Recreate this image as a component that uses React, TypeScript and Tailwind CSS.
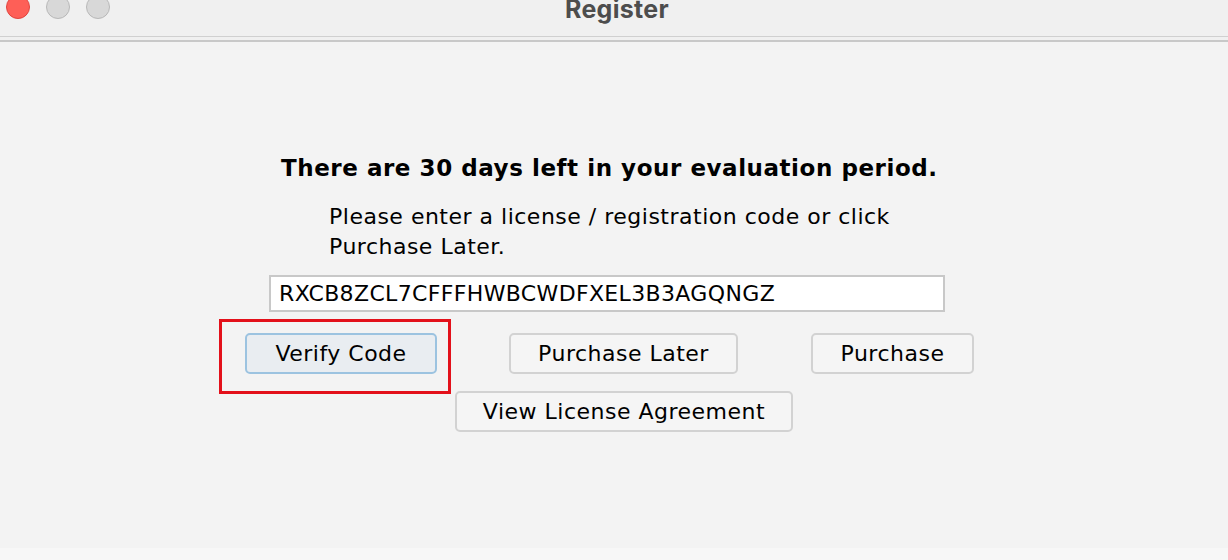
export default function App() {
  const font = { fontFamily: '"DejaVu Sans", "Lucida Grande", sans-serif' }

  return (
    <div className="w-[1228px] h-[560px] bg-[#f3f3f3] flex flex-col overflow-hidden" style={font}>
      {/* title bar */}
      <div className="h-[36px] bg-[#f0f0f0] flex items-start relative overflow-hidden">
        <div className="flex gap-[16px] pl-[6px] -mt-[5px]">
          <span className="w-[24px] h-[24px] rounded-full bg-[#fe5f57] border border-[#e0443e]" />
          <span className="w-[24px] h-[24px] rounded-full bg-[#d8d8d8] border border-[#b8b8b8]" />
          <span className="w-[24px] h-[24px] rounded-full bg-[#d8d8d8] border border-[#b8b8b8]" />
        </div>
        <div
          className="absolute left-0 right-0 -top-[9px] pl-[6px] text-center text-[25px] font-bold tracking-[0.3px] text-[#4d4d4d]"
          style={{ fontFamily: 'Inter, "Liberation Sans", sans-serif' }}
        >
          Register
        </div>
      </div>
      <div className="h-px bg-[#d0d0d0]" />
      <div className="h-[3px] bg-[#f0f0f0]" />
      <div className="h-[2px] bg-[#c8c8c8]" />

      {/* body */}
      <div className="flex-1 flex flex-col pt-[112px]">
        <div className="ml-[281px] text-[23px] tracking-[0.55px] font-bold text-black leading-[28px]">
          There are 30 days left in your evaluation period.
        </div>
        <div className="ml-[329px] mt-[20px] text-[22px] tracking-[0.5px] text-black leading-[30px]">
          Please enter a license / registration code or click
          <br />
          Purchase Later.
        </div>
        <div className="ml-[269px] mt-[13px] w-[676px] h-[37px] bg-white border-2 border-[#c8c8c8] flex items-center pl-[8px] text-[22px] tracking-[0.35px] text-black">
          RXCB8ZCL7CFFFHWBCWDFXEL3B3AGQNGZ
        </div>

        <div className="flex items-start mt-[7px] ml-[219px]">
          <div className="border-[3px] border-[#e3101a] w-[232px] h-[75px] flex items-start pt-[11px] pl-[23px]">
            <button className="w-[192px] h-[41px] rounded-[5px] border-2 border-[#9cc3e0] bg-[#e9edf1] text-[22px] tracking-[0.5px] text-black">
              Verify Code
            </button>
          </div>
          <button className="ml-[58px] mt-[14px] w-[229px] h-[41px] rounded-[5px] border-2 border-[#d2d2d2] bg-[#f5f5f5] text-[22px] tracking-[0.5px] text-black">
            Purchase Later
          </button>
          <button className="ml-[73px] mt-[14px] w-[163px] h-[41px] rounded-[5px] border-2 border-[#d2d2d2] bg-[#f5f5f5] text-[22px] tracking-[0.5px] text-black">
            Purchase
          </button>
        </div>

        <button className="ml-[455px] -mt-[3px] w-[338px] h-[41px] rounded-[5px] border-2 border-[#d2d2d2] bg-[#f5f5f5] text-[22px] tracking-[0.5px] text-black">
          View License Agreement
        </button>
      </div>

      <div className="h-[12px] bg-[#f7f7f7]" />
    </div>
  )
}
